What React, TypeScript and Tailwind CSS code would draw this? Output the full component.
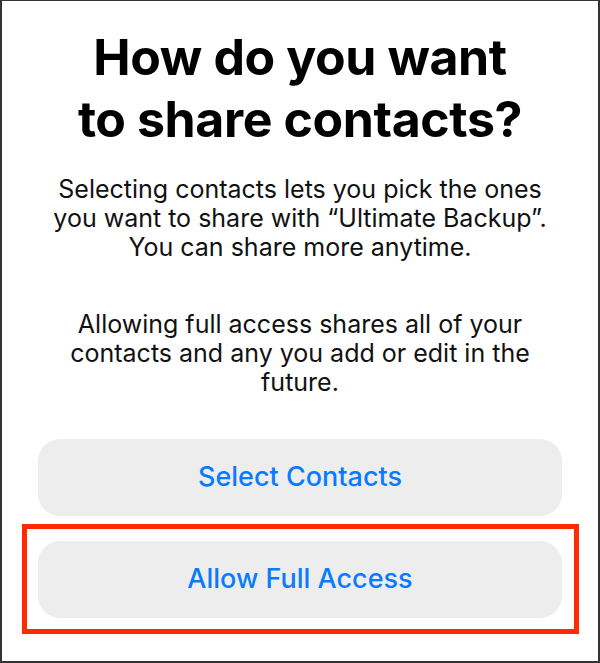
import React from "react";

const App: React.FC = () => {
  return (
    <div
      className="w-[600px] h-[663px] bg-white border-l-2 border-b-2 border-t border-r-2 border-[#333333] flex flex-col items-center text-center text-black"
      style={{ fontFamily: "Inter, 'Noto Sans', sans-serif" }}
    >
      <h1 className="mt-[25px] text-[50px] leading-[62px] font-bold tracking-[-0.4px]">
        How do you want
        <br />
        to share contacts?
      </h1>

      <p className="mt-[25px] text-[25px] leading-[29px] text-[#111111]">
        Selecting contacts lets you pick the ones
        <br />
        you want to share with “Ultimate Backup”.
        <br />
        You can share more anytime.
      </p>

      <p className="mt-[48px] text-[25px] leading-[29px] text-[#111111]">
        Allowing full access shares all of your
        <br />
        contacts and any you add or edit in the
        <br />
        future.
      </p>

      <div className="mt-[42px] w-full px-[36px] flex flex-col gap-[25px]">
        <button className="h-[77px] w-full rounded-[22px] bg-[#ededee] text-[27px] font-medium text-[#0a7aff]">
          Select Contacts
        </button>
        <div className="relative">
          <button className="h-[77px] w-full rounded-[22px] bg-[#ededee] text-[27px] font-medium text-[#0a7aff]">
            Allow Full Access
          </button>
          {/* highlight box */}
          <div className="absolute -left-[16px] -right-[17px] -top-[17px] -bottom-[16px] border-[5px] border-[#ff2a00] pointer-events-none" />
        </div>
      </div>
    </div>
  );
};

export default App;
